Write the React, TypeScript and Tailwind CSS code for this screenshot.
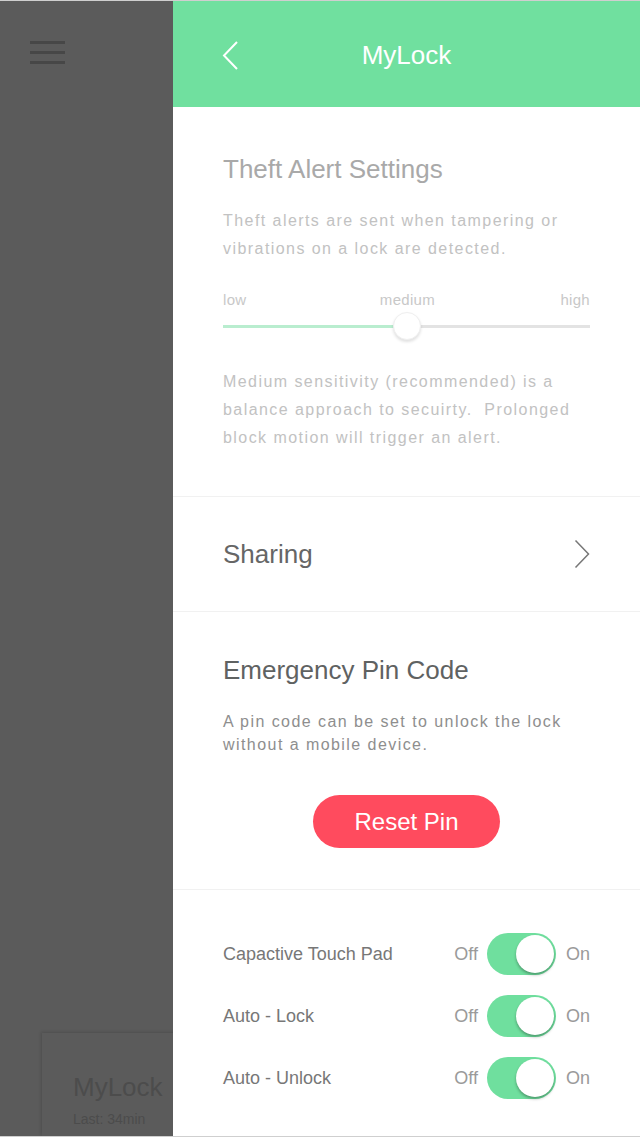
import React from "react";

const font = { fontFamily: '"Liberation Sans", Arial, sans-serif' };

function Toggle() {
  return (
    <div className="flex h-[42px] w-[69px] items-center justify-end rounded-full bg-[#6fdf9e] pr-[2px]">
      <div className="h-[38px] w-[38px] rounded-full bg-white shadow-[0_2px_3px_rgba(0,0,0,0.3)]" />
    </div>
  );
}

const switches = ["Capactive Touch Pad", "Auto - Lock", "Auto - Unlock"];

export default function App() {
  return (
    <div
      className="flex h-[1137px] w-[640px] overflow-hidden border-t border-b border-[#cfcfcf]"
      style={font}
    >
      {/* dimmed drawer behind */}
      <aside className="flex w-[173px] shrink-0 flex-col bg-[#5b5b5b]">
        <div className="ml-[30px] mt-[40px] flex w-[35px] flex-col gap-[7px]">
          <span className="h-[3px] bg-[#474747]" />
          <span className="h-[3px] bg-[#474747]" />
          <span className="h-[3px] bg-[#474747]" />
        </div>
        <div className="ml-[42px] mt-auto h-[103px] w-[160px] bg-[#5b5b5b] pl-[31px] pt-[40px] shadow-[-1px_-1px_3px_rgba(0,0,0,0.15)]">
          <p className="text-[26px] leading-[28px] text-[#4c4c4c]">MyLock</p>
          <p className="mt-[10px] text-[14px] leading-[16px] text-[#4c4c4c]">Last: 34min</p>
        </div>
      </aside>

      <main className="relative z-10 flex flex-1 flex-col bg-white">
        <header className="relative flex h-[106px] items-center justify-center bg-[#70e09f] pt-[2px]">
          <svg
            className="absolute left-[49px] top-[40px]"
            width="18"
            height="30"
            viewBox="0 0 18 30"
            fill="none"
            stroke="white"
            strokeWidth="2"
          >
            <path d="M15 1 L2 14.5 L15 28" />
          </svg>
          <h1 className="text-[26px] leading-[28px] text-white">MyLock</h1>
        </header>

        <section className="border-b border-[#f1f1f1] px-[50px] pb-[44px] pt-[48px]">
          <h2 className="text-[26px] leading-[28px] text-[#a9a9a9]">Theft Alert Settings</h2>
          <p className="mt-[24px] text-[16px] leading-[28px] tracking-[0.09em] text-[#c2c2c2]">
            Theft alerts are sent when tampering or vibrations on a lock are detected.
          </p>
          <div className="mt-[27px] flex justify-between text-[15px] leading-[20px] tracking-[0.02em] text-[#c8c8c8]">
            <span>low</span>
            <span className="pl-[8px]">medium</span>
            <span>high</span>
          </div>
          <div className="relative mt-[2px] flex h-[28px] items-center">
            <div className="h-[3px] w-1/2 bg-[#b9edcf]" />
            <div className="h-[3px] w-1/2 bg-[#e3e3e3]" />
            <div className="absolute left-1/2 top-0 h-[28px] w-[28px] -translate-x-1/2 rounded-full border border-[#efefef] bg-white shadow-[0_2px_3px_rgba(0,0,0,0.12)]" />
          </div>
          <p className="mt-[28px] text-[16px] leading-[28px] tracking-[0.09em] text-[#c2c2c2]">
            Medium sensitivity (recommended) is a balance approach to secuirty.&nbsp; Prolonged
            block motion will trigger an alert.
          </p>
        </section>

        <section className="flex h-[115px] items-center justify-between border-b border-[#f1f1f1] px-[50px]">
          <span className="text-[26px] leading-[28px] text-[#666666]">Sharing</span>
          <svg width="16" height="30" viewBox="0 0 16 30" fill="none" stroke="#777" strokeWidth="1.5">
            <path d="M1.5 1.5 L14.5 15 L1.5 28.5" />
          </svg>
        </section>

        <section className="border-b border-[#f1f1f1] px-[50px] pb-[41px] pt-[44px]">
          <h2 className="text-[26px] leading-[28px] text-[#5f6262]">Emergency Pin Code</h2>
          <p className="mt-[26px] text-[16px] leading-[23px] tracking-[0.09em] text-[#8e8e8e]">
            A pin code can be set to unlock the lock without a mobile device.
          </p>
          <div className="mt-[39px] flex justify-center">
            <button className="h-[53px] w-[187px] rounded-full bg-[#ff4b5e] text-[24px] text-white">
              Reset Pin
            </button>
          </div>
        </section>

        <section className="flex flex-col gap-[20px] px-[50px] pt-[43px]">
          {switches.map((label) => (
            <div key={label} className="flex h-[42px] items-center">
              <span className="flex-1 text-[18px] text-[#777777]">{label}</span>
              <span className="mr-[9px] text-[18px] text-[#9a9a9a]">Off</span>
              <Toggle />
              <span className="ml-[10px] text-[18px] text-[#9a9a9a]">On</span>
            </div>
          ))}
        </section>
      </main>
    </div>
  );
}
